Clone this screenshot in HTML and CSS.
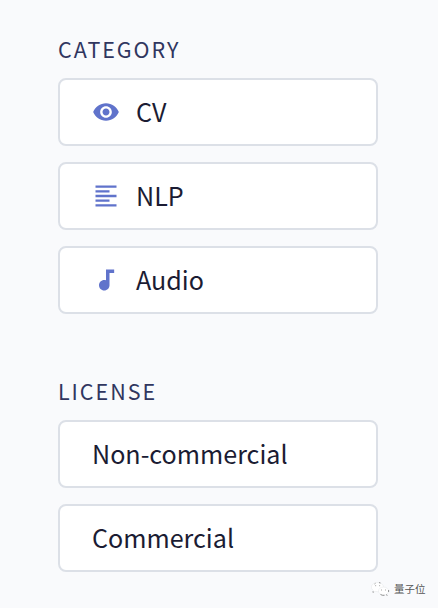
FILE: index.html
```html
<!DOCTYPE html>
<html lang="en">
<head>
<meta charset="utf-8">
<title>Filters</title>
<link rel="stylesheet" href="styles.css">
</head>
<body>
<main class="filters">
  <section class="group">
    <h2 class="heading">Category</h2>
    <div class="option">
      <svg class="icon" viewBox="0 0 24 24"><path d="M12 4.5C7 4.5 2.73 7.61 1 12c1.73 4.39 6 7.5 11 7.5s9.27-3.11 11-7.5c-1.73-4.39-6-7.5-11-7.5zM12 17c-2.76 0-5-2.24-5-5s2.24-5 5-5 5 2.24 5 5-2.24 5-5 5zm0-8c-1.66 0-3 1.34-3 3s1.34 3 3 3 3-1.34 3-3-1.34-3-3-3z"/></svg>
      <span>CV</span>
    </div>
    <div class="option">
      <svg class="icon" viewBox="0 0 24 24"><path d="M15 15H3v2h12v-2zm0-8H3v2h12V7zM3 13h18v-2H3v2zm0 8h18v-2H3v2zM3 3v2h18V3H3z"/></svg>
      <span>NLP</span>
    </div>
    <div class="option">
      <svg class="icon" viewBox="0 0 24 24"><path d="M12 3v9.260c-.5-.170-1-.260-1.500-.260C8 12 6 14 6 16.500S8 21 10.500 21s4.500-2 4.500-4.500V6h4V3h-7z"/></svg>
      <span>Audio</span>
    </div>
  </section>
  <section class="group">
    <h2 class="heading">License</h2>
    <div class="option"><span>Non-commercial</span></div>
    <div class="option"><span>Commercial</span></div>
  </section>
</main>
<div class="watermark">
  <svg class="bubbles" viewBox="0 0 20 16"><path class="bubble" d="M7.5 1.5C4 1.5 1.5 3.6 1.5 6.2c0 1.500.8 2.700 2 3.500L3 11.500l2.200-1.100c.7.2 1.500.300 2.300.300 3.500 0 6-2 6-4.500S11 1.500 7.500 1.500z"/><path class="bubble" d="M13.500 6c-2.800 0-5 1.800-5 4s2.200 4 5 4c.600 0 1.200-.1 1.800-.300L17 14.700l-.400-1.500c1.200-.700 1.900-1.900 1.900-3.200 0-2.200-2.200-4-5-4z"/><path class="shade" d="M3 10.300l.2 1.400M4.500 3l1-.7M9 1.600l1.500.4M5.300 4.700h.8M9.300 4.700h.8M11 9h.8M15 9h.8M10.500 13.500l2 .8h2M17.200 14.700l-.7-1.300M18.600 9v2"/></svg>
  <span>量子位</span>
</div>
</body>
</html>
```
FILE: styles.css
```css
* {
  box-sizing: border-box;
}

body {
  position: relative;
  margin: 0;
  height: 608px;
  overflow: hidden;
  background: #f9fafc;
  font-family: "Noto Sans CJK SC", sans-serif;
}

.filters {
  display: flex;
  flex-direction: column;
  gap: 64px;
  padding: 36px 60px 0 58px;
}

.group {
  display: flex;
  flex-direction: column;
  gap: 16px;
}

.heading {
  margin: 0 0 -2px;
  height: 28px;
  line-height: 26px;
  font-size: 21.5px;
  font-weight: 400;
  letter-spacing: 1.95px;
  text-transform: uppercase;
  color: #30365f;
}

.option {
  display: flex;
  align-items: center;
  gap: 16px;
  height: 68px;
  padding: 0 32px;
  border: 2px solid #dce0e7;
  border-radius: 8px;
  background: #fff;
  font-size: 25.1px;
  line-height: 36px;
  color: #1b1c33;
}

.option span {
  padding-bottom: 2px;
}

.option span {
  display: block;
}

.icon {
  width: 28px;
  height: 28px;
  fill: #6073cb;
}

.watermark {
  position: absolute;
  left: 370px;
  top: 581px;
  display: flex;
  align-items: center;
  gap: 4px;
  height: 16px;
  font-size: 10.5px;
  line-height: 16px;
  color: #555;
}

.bubbles {
  width: 20px;
  height: 16px;
}

.bubble {
  fill: #fff;
  stroke: #e3e4e7;
  stroke-width: 0.5;
}

.shade {
  fill: none;
  stroke: #777;
  stroke-width: 0.8;
}
```
